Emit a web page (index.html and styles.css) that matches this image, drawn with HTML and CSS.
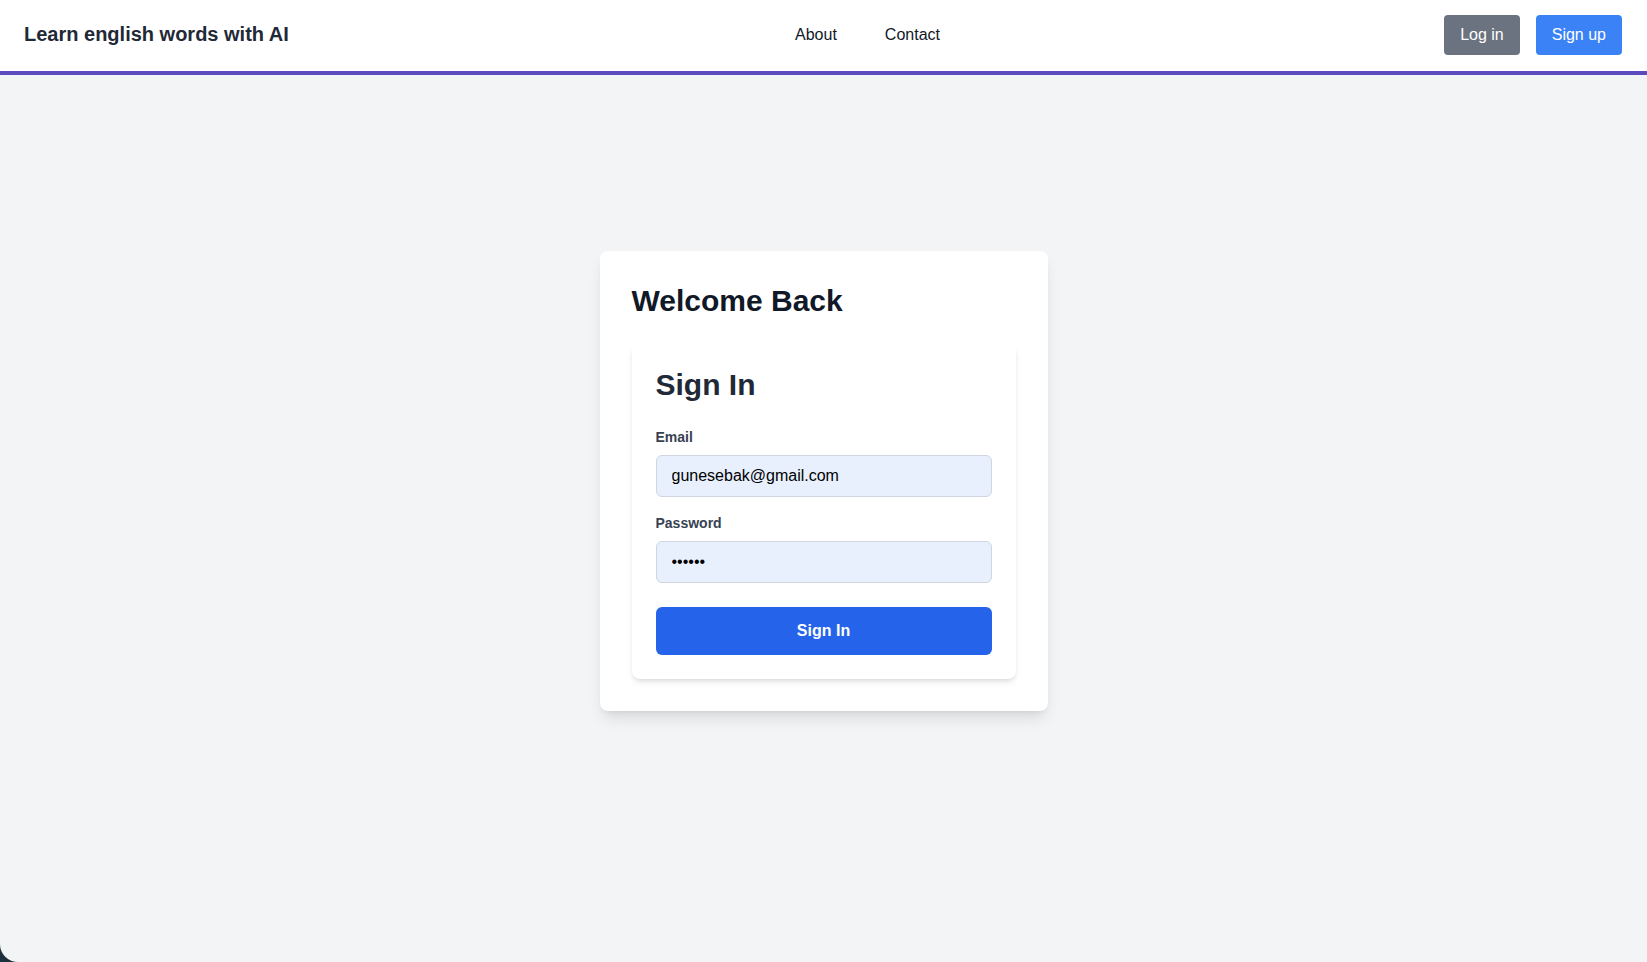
FILE: index.html
```html
<!DOCTYPE html>
<html lang="en">
<head>
<meta charset="utf-8">
<title>Learn english words with AI</title>
<link rel="stylesheet" href="styles.css">
</head>
<body>
<div class="page">
  <header class="navbar">
    <div class="brand">Learn english words with AI</div>
    <nav class="links">
      <a href="#" class="link">About</a>
      <a href="#" class="link">Contact</a>
    </nav>
    <div class="actions">
      <button class="btn btn-gray">Log in</button>
      <button class="btn btn-blue">Sign up</button>
    </div>
  </header>
  <main class="main">
    <section class="card">
      <h1 class="welcome">Welcome Back</h1>
      <div class="inner">
        <h2 class="signin-title">Sign In</h2>
        <form class="form">
          <label class="label">Email</label>
          <input class="input" type="email" value="gunesebak@gmail.com">
          <label class="label">Password</label>
          <input class="input" type="password" value="123456">
          <button type="button" class="submit">Sign In</button>
        </form>
      </div>
    </section>
  </main>
</div>
</body>
</html>
```
FILE: styles.css
```css
* { box-sizing: border-box; }
html {
  background: #1d313c;
  margin: 0;
  padding: 0;
}
body {
  margin: 0;
  font-family: "Liberation Sans", Arial, Helvetica, sans-serif;
  color: #111827;
}
.page {
  min-height: 962px;
  height: 962px;
  background: #f3f4f6;
  border-bottom-left-radius: 18px;
  overflow: hidden;
}
.navbar {
  height: 75px;
  background: #ffffff;
  border-bottom: 4px solid #5a4cbf;
  display: flex;
  align-items: center;
  justify-content: space-between;
  padding: 0 25px 2px 24px;
}
.brand {
  font-size: 20px;
  font-weight: 700;
  color: #1f2937;
}
.links {
  display: flex;
  gap: 48px;
  margin-left: 2px;
}
.link {
  color: #111827;
  text-decoration: none;
  font-size: 16px;
}
.actions {
  display: flex;
  gap: 16px;
}
.btn {
  font-family: inherit;
  font-size: 16px;
  color: #ffffff;
  border: 0;
  border-radius: 4px;
  height: 40px;
  padding: 0 16px;
  line-height: 40px;
}
.btn-gray { background: #6b7280; }
.btn-blue { background: #3b82f6; }
.main {
  display: flex;
  justify-content: center;
  padding-top: 176px;
}
.card {
  width: 448px;
  background: #ffffff;
  border-radius: 8px;
  padding: 32px;
  box-shadow: 0 10px 15px -3px rgba(0,0,0,0.1), 0 4px 6px -4px rgba(0,0,0,0.1);
}
.welcome {
  margin: 0 0 24px;
  font-size: 30px;
  line-height: 36px;
  font-weight: 700;
  color: #111827;
}
.inner {
  background: #ffffff;
  border-radius: 8px;
  padding: 24px;
  box-shadow: 0 4px 6px -1px rgba(0,0,0,0.1), 0 2px 4px -2px rgba(0,0,0,0.1);
}
.signin-title {
  margin: 0 0 24px;
  font-size: 30px;
  line-height: 36px;
  font-weight: 700;
  color: #1f2937;
}
.form {
  display: flex;
  flex-direction: column;
}
.label {
  font-size: 14px;
  line-height: 20px;
  font-weight: 700;
  color: #374151;
  margin-bottom: 8px;
}
.input {
  height: 42px;
  border: 1px solid #cfd6e0;
  border-radius: 6px;
  background: #e8f0fe;
  padding: 0 15px;
  font-family: inherit;
  font-size: 16px;
  color: #000000;
  margin-bottom: 16px;
  outline: none;
}
.input[type="password"] { margin-bottom: 24px; }
.submit {
  height: 48px;
  border: 0;
  border-radius: 6px;
  background: #2563eb;
  color: #ffffff;
  font-family: inherit;
  font-size: 16px;
  font-weight: 700;
}
```
